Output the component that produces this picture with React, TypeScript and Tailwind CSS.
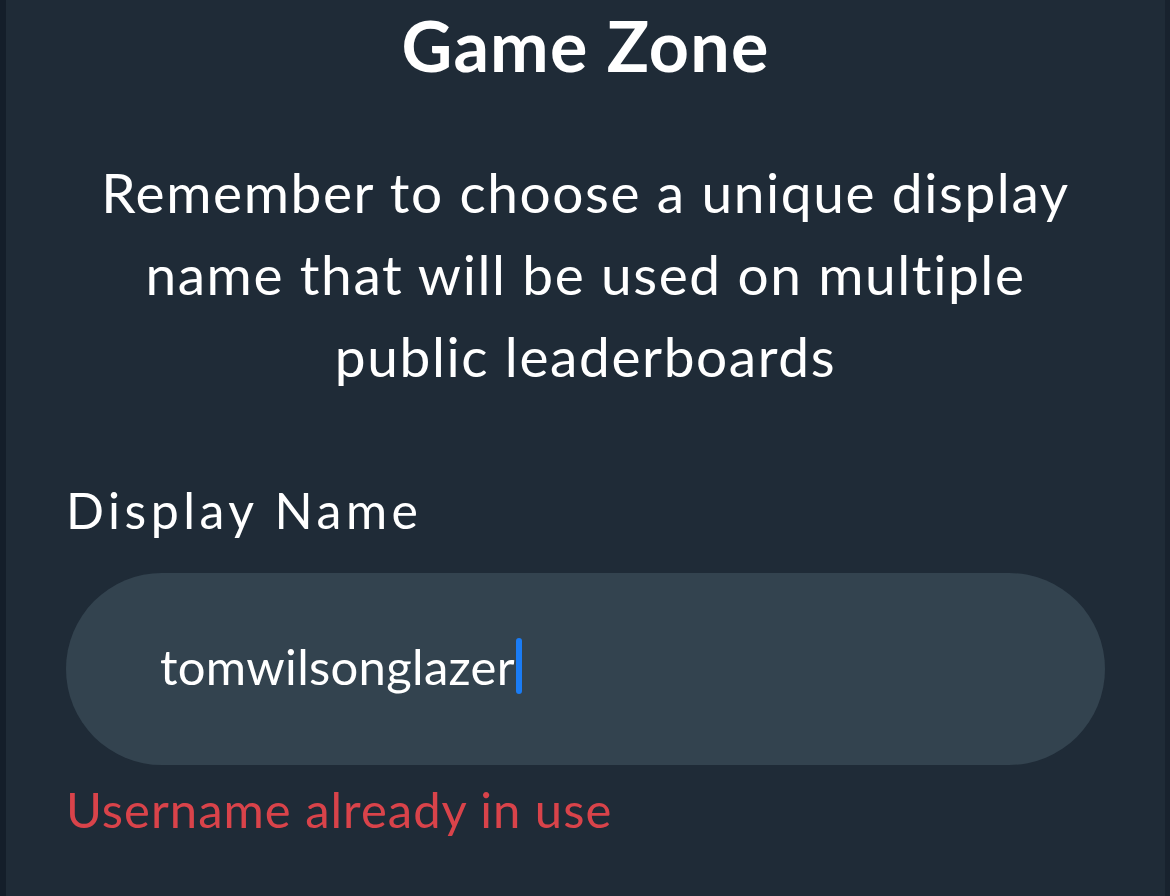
export default function App() {
  return (
    <div className="flex h-[896px] w-full overflow-hidden bg-[#1f2b37]" style={{ fontFamily: "Lato, 'Noto Sans', sans-serif" }}>
      <div className="w-[6px] shrink-0 bg-[#141e2a]" />
      <main className="flex flex-1 flex-col px-[60px]">
        <h1 className="mt-[3px] text-center text-[70px] font-bold leading-[84px] tracking-[1.2px] text-white">Game Zone</h1>
        <p className="mt-[64px] text-center text-[55px] leading-[82px] tracking-[1.6px] text-white">
          Remember to choose a unique display
          <br />
          name that will be used on multiple
          <br />
          public leaderboards
        </p>
        <label className="mt-[83px] text-[50px] leading-[60px] tracking-[4.5px] text-white">Display Name</label>
        <div className="mt-[33px] flex h-[192px] w-[1039px] items-center rounded-full bg-[#33434f] pb-[6px] pl-[94px]">
          <span className="text-[49px] leading-none tracking-[0.3px] text-white">tomwilsonglazer</span>
          <span className="ml-[1px] h-[56px] w-[6px] rounded-full bg-[#1a7cf5]" />
        </div>
        <p className="mt-[14px] text-[49px] leading-[60px] tracking-[1px] text-[#d9434a]">Username already in use</p>
      </main>
      <div className="w-[6px] shrink-0 bg-[#18222e]" />
    </div>
  )
}
